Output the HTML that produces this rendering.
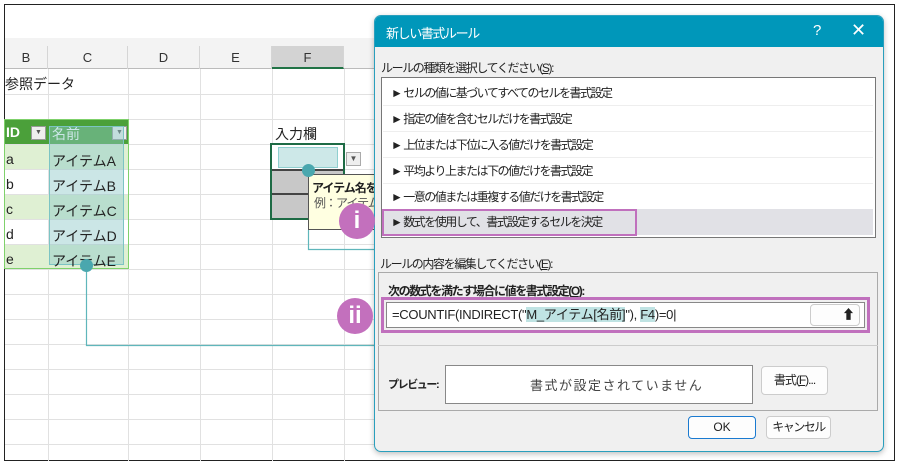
<!DOCTYPE html>
<html><head><meta charset="utf-8"><style>
*{margin:0;padding:0;box-sizing:border-box}
body{width:899px;height:465px;background:#fff;position:relative;overflow:hidden;font-family:"Liberation Sans","Noto Sans CJK JP",sans-serif;color:#222}
.a{position:absolute}
.t{position:absolute;white-space:nowrap;font-size:13px}
.d{letter-spacing:-1.4px;font-size:12px}
.vl{position:absolute;width:1px;background:#e1e1e1}
.hl{position:absolute;height:1px;background:#e1e1e1}
.ch{position:absolute;top:46px;height:23px;font-size:13px;text-align:center;line-height:23px;color:#333;border-right:1px solid #d5d5d5}
.item{position:absolute;left:383px;width:490px;height:26px;font-size:12px;letter-spacing:-1.5px;line-height:26px;padding-left:8px;border-bottom:1px solid #eee;white-space:nowrap}
.circ{position:absolute;width:36px;height:36px;border-radius:50%;background:#c370bd;color:#fff;font-size:24px;text-align:center;line-height:36px;font-weight:bold}
.dot{position:absolute;width:13px;height:13px;border-radius:50%;background:#4aa7ae}
.btn{position:absolute;background:#fdfdfd;border:1px solid #ccc;border-radius:4px;font-size:12px;text-align:center}
.hi{background:#bfe3e3}
</style></head><body>
<div class="a" style="left:4px;top:4px;width:891px;height:457px;border:1px solid #222"></div>
<div class="a" style="left:5px;top:38px;width:370px;height:31px;background:#f3f3f3;border-bottom:1px solid #bbb"></div>
<div class="ch" style="left:5px;width:43px">B</div>
<div class="ch" style="left:48px;width:80px">C</div>
<div class="ch" style="left:128px;width:72px">D</div>
<div class="ch" style="left:200px;width:72px">E</div>
<div class="ch" style="left:272px;width:72px;background:#d3d3d3;border-bottom:2px solid #217346">F</div>
<div class="vl" style="left:48px;top:69px;height:392px"></div>
<div class="vl" style="left:128px;top:69px;height:392px"></div>
<div class="vl" style="left:200px;top:69px;height:392px"></div>
<div class="vl" style="left:272px;top:69px;height:392px"></div>
<div class="vl" style="left:344px;top:69px;height:392px"></div>
<div class="hl" style="left:5px;top:94px;width:370px"></div>
<div class="hl" style="left:5px;top:119px;width:370px"></div>
<div class="hl" style="left:5px;top:144px;width:370px"></div>
<div class="hl" style="left:5px;top:169px;width:370px"></div>
<div class="hl" style="left:5px;top:194px;width:370px"></div>
<div class="hl" style="left:5px;top:219px;width:370px"></div>
<div class="hl" style="left:5px;top:244px;width:370px"></div>
<div class="hl" style="left:5px;top:269px;width:370px"></div>
<div class="hl" style="left:5px;top:294px;width:370px"></div>
<div class="hl" style="left:5px;top:319px;width:370px"></div>
<div class="hl" style="left:5px;top:344px;width:370px"></div>
<div class="hl" style="left:5px;top:369px;width:370px"></div>
<div class="hl" style="left:5px;top:394px;width:370px"></div>
<div class="hl" style="left:5px;top:419px;width:370px"></div>
<div class="hl" style="left:5px;top:444px;width:370px"></div>
<div class="t" style="left:5px;top:74px;font-size:14px">参照データ</div>
<div class="a" style="left:5px;top:120px;width:123px;height:24px;background:#4ba03a"></div>
<div class="t" style="left:6px;top:124px;color:#fff;font-weight:bold;font-size:14px">ID</div>
<div class="a" style="left:31px;top:126px;width:15px;height:14px;background:#eee;border:1px solid #999;font-size:7px;color:#555;text-align:center;line-height:12px">▼</div>
<div class="t" style="left:52px;top:124px;color:#fff;font-size:14px">名前</div>
<div class="a" style="left:112px;top:126px;width:15px;height:14px;background:#eee;border:1px solid #999;font-size:7px;color:#555;text-align:center;line-height:12px">▼</div>
<div class="a" style="left:5px;top:145px;width:123px;height:24px;background:#dff0d3"></div>
<div class="a" style="left:5px;top:195px;width:123px;height:24px;background:#dff0d3"></div>
<div class="a" style="left:5px;top:245px;width:123px;height:24px;background:#dff0d3"></div>
<div class="a" style="left:4px;top:119px;width:125px;height:150px;border:1px solid #7fd16b"></div>
<div class="a" style="left:49px;top:126px;width:75px;height:139px;background:rgba(140,200,200,.45);border:1px solid #7cc4c4"></div>
<div class="t" style="left:6px;top:151px;font-size:14px">a</div>
<div class="t" style="left:6px;top:176px;font-size:14px">b</div>
<div class="t" style="left:6px;top:201px;font-size:14px">c</div>
<div class="t" style="left:6px;top:226px;font-size:14px">d</div>
<div class="t" style="left:6px;top:251px;font-size:14px">e</div>
<div class="t" style="left:52px;top:151px;font-size:14px">アイテムA</div>
<div class="t" style="left:52px;top:176px;font-size:14px">アイテムB</div>
<div class="t" style="left:52px;top:201px;font-size:14px">アイテムC</div>
<div class="t" style="left:52px;top:226px;font-size:14px">アイテムD</div>
<div class="t" style="left:52px;top:251px;font-size:14px">アイテムE</div>
<div class="t" style="left:275px;top:124px;font-size:14px">入力欄</div>
<div class="a" style="left:270px;top:143px;width:75px;height:77px;border:2px solid #1e6b45;background:#c8c8c8"></div>
<div class="a" style="left:272px;top:145px;width:71px;height:24px;background:#fff"></div>
<div class="a" style="left:278px;top:147px;width:60px;height:21px;background:#cde8e8;border:1px solid #8fcfcf"></div>
<div class="a" style="left:272px;top:169px;width:71px;height:2px;background:#444"></div>
<div class="a" style="left:272px;top:193px;width:71px;height:2px;background:#444"></div>
<div class="a" style="left:346px;top:152px;width:15px;height:14px;background:#eee;border:1px solid #aaa;font-size:8px;text-align:center;line-height:12px;color:#555">▼</div>
<div class="a" style="left:308px;top:174px;width:70px;height:56px;background:#ffffe1;border:1px solid #555;border-right:none;overflow:hidden">
<div class="t" style="left:3px;top:4px;font-size:12px;font-weight:bold;letter-spacing:-1px">アイテム名を</div>
<div class="t" style="left:5px;top:19px;font-size:12px;color:#555;letter-spacing:-1px">例：アイテム</div></div>
<svg class="a" style="left:0;top:0" width="899" height="465"><g fill="none" stroke="#5fb6bb" stroke-width="1.2">
<path d="M308.5 230V249.5H643.5V300"/><path d="M86.5 265V345.5H576.5V322"/></g></svg>
<div class="dot" style="left:302px;top:164px"></div>
<div class="dot" style="left:80px;top:259px"></div>
<div class="a" style="left:374px;top:15px;width:510px;height:437px;background:#f0f0f0;border:1px solid #2a9fbd;border-radius:7px;box-shadow:0 2px 6px rgba(0,0,0,.25);overflow:hidden">
<div class="a" style="left:0;top:0;width:510px;height:31px;background:#0097ba"></div>
</div>
<div class="t d" style="left:386px;top:23px;color:#fff;font-size:13px">新しい書式ルール</div>
<div class="t" style="left:813px;top:22px;color:#fff;font-size:15px">?</div>
<div class="t" style="left:851px;top:20px;color:#fff;font-size:18px">✕</div>
<div class="t d" style="left:381px;top:59px">ルールの種類を選択してください(<u>S</u>):</div>
<div class="a" style="left:381px;top:77px;width:495px;height:161px;background:#fff;border:1px solid #777"></div>
<div class="item" style="top:80px">► セルの値に基づいてすべてのセルを書式設定</div>
<div class="item" style="top:106px">► 指定の値を含むセルだけを書式設定</div>
<div class="item" style="top:132px">► 上位または下位に入る値だけを書式設定</div>
<div class="item" style="top:158px">► 平均より上または下の値だけを書式設定</div>
<div class="item" style="top:184px">► 一意の値または重複する値だけを書式設定</div>
<div class="item" style="top:209px;background:#e1e1e6;border:none">► 数式を使用して、書式設定するセルを決定</div>
<div class="a" style="left:382px;top:209px;width:255px;height:27px;border:2px solid #c070bd"></div>
<div class="t d" style="left:380px;top:255px">ルールの内容を編集してください(<u>E</u>):</div>
<div class="a" style="left:378px;top:272px;width:500px;height:139px;border:1px solid #aaa"></div>
<div class="t d" style="left:388px;top:282px;font-weight:bold">次の数式を満たす場合に値を書式設定(<u>O</u>):</div>
<div class="a" style="left:381px;top:297px;width:489px;height:36px;border:3px solid #c070bd"></div>
<div class="a" style="left:386px;top:302px;width:479px;height:26px;background:#fff;border:1px solid #888"></div>
<div class="t" style="left:392px;top:306px;font-size:13px;letter-spacing:-0.3px;line-height:18px">=COUNTIF(INDIRECT("<span class="hi">M_アイテム[名前]</span>"), <span class="hi">F4</span>)=0|</div>
<div class="btn" style="left:810px;top:304px;width:50px;height:22px;font-size:13px;font-weight:bold;line-height:20px;text-align:right;padding-right:4px">⬆</div>
<div class="a" style="left:378px;top:345px;width:500px;height:1px;background:#ccc"></div>
<div class="t d" style="left:388px;top:376px;font-weight:bold;font-size:11px">プレビュー:</div>
<div class="a" style="left:445px;top:365px;width:308px;height:39px;background:#fff;border:1px solid #888"></div>
<div class="t" style="left:530px;top:375px;font-size:13px;color:#444;letter-spacing:1.5px">書式が設定されていません</div>
<div class="btn" style="left:761px;top:366px;width:67px;height:29px;line-height:27px;letter-spacing:-1px">書式(<u>F</u>)...</div>
<div class="btn" style="left:688px;top:416px;width:68px;height:23px;line-height:21px;border:1.5px solid #1a7ad0">OK</div>
<div class="btn" style="left:766px;top:416px;width:65px;height:23px;line-height:21px;letter-spacing:-1.5px">キャンセル</div>
<div class="circ" style="left:339px;top:203px">i</div>
<div class="circ" style="left:337px;top:298px">ii</div>
</body></html>
